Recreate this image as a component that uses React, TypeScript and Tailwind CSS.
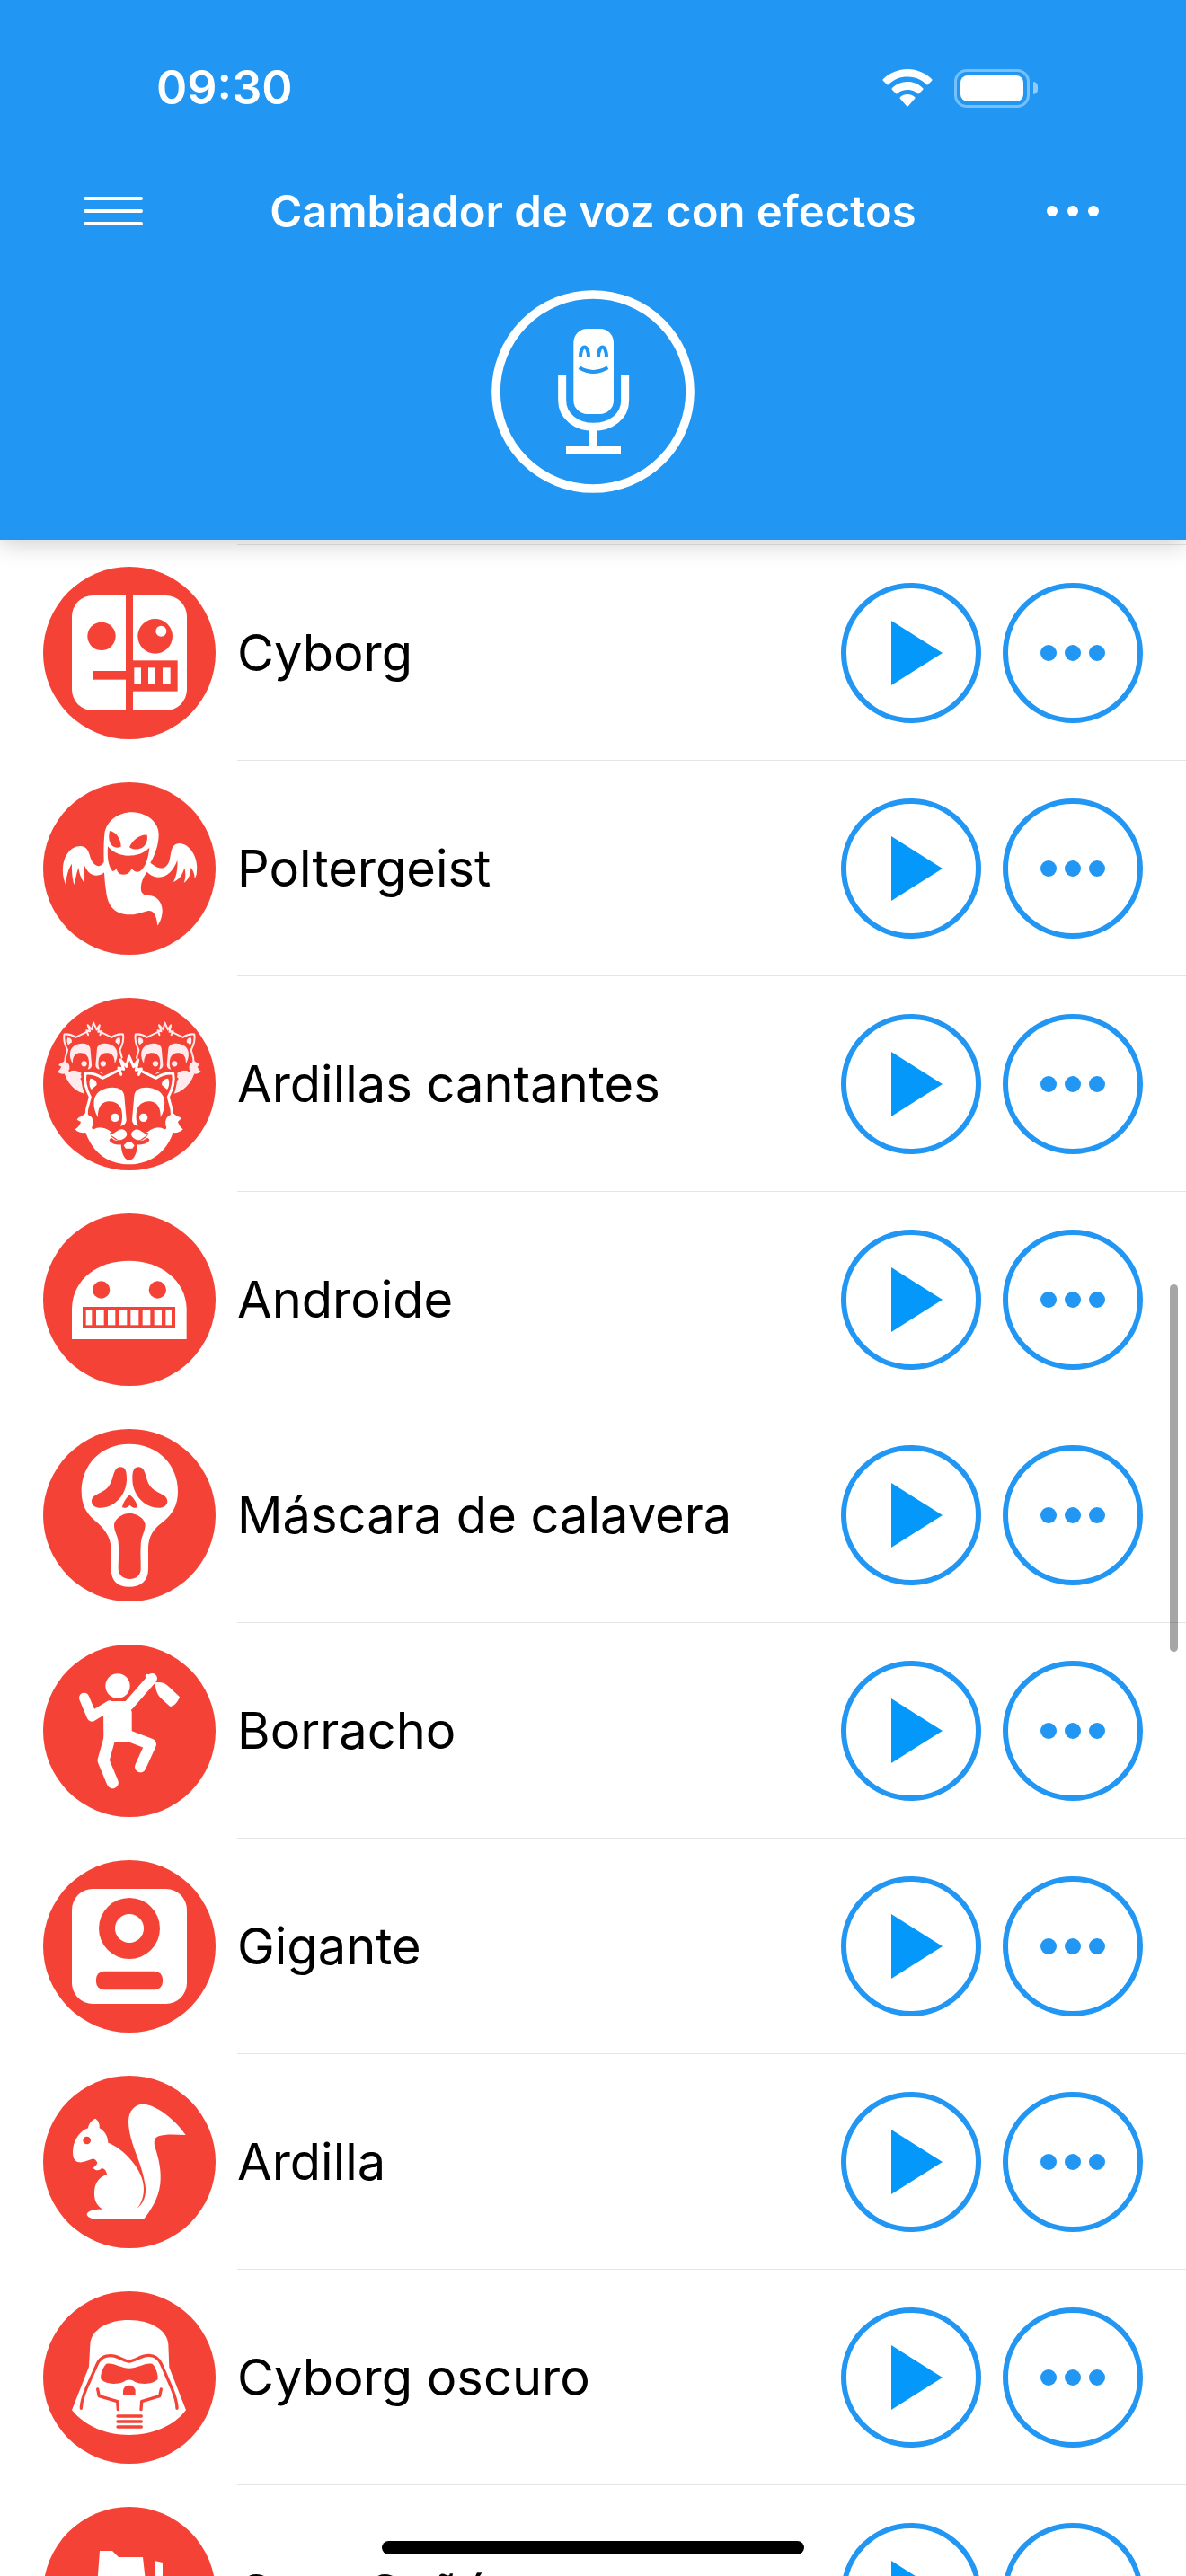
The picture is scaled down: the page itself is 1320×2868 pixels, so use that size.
import type { ReactNode } from "react";

const RED = "#f44336";
const BLUE = "#2196f3";

function Badge({ children }: { children: ReactNode }) {
  return (
    <svg viewBox="24 33 576 576" className="size-[192px] shrink-0" aria-hidden="true">
      <circle cx="312" cy="321" r="288" fill={RED} />
      {children}
    </svg>
  );
}

function Cyborg() {
  return (
    <Badge>
      <rect x="120" y="129" width="384" height="384" rx="70" fill="#fff" />
      <g fill={RED}>
        <rect x="300" y="129" width="24" height="384" />
        <circle cx="219" cy="265" r="47" />
        <circle cx="398" cy="265" r="58" />
        <rect x="189" y="381" width="120" height="29" />
        <rect x="320" y="346" width="153" height="103" />
      </g>
      <g fill="#fff">
        <circle cx="418" cy="248" r="18" />
        <rect x="328" y="370" width="23" height="54" />
        <rect x="375" y="370" width="24" height="54" />
        <rect x="423" y="370" width="26" height="54" />
      </g>
    </Badge>
  );
}

function Ghost() {
  return (
    <Badge>
      <path
        fill="#fff"
        d="M323 133C370 135 410 165 410 207C410 245 395 280 382 302C396 312 412 324 428 318C462 302 436 240 478 237C518 238 542 290 537 326C537 338 536 346 530 353C530 338 524 326 517 317C518 340 508 360 494 369C501 350 500 334 496 319C490 340 480 358 459 366C470 345 474 318 472 293C460 325 440 350 410 350C392 350 378 340 371 332C355 355 347 375 352 398C360 413 375 410 385 412C410 418 423 440 422 465C420 490 412 503 406 512C404 490 398 462 377 462C360 464 345 475 314 475C250 474 238 430 234 395C230 370 229 350 228 334C215 347 190 348 175 332C165 320 163 312 160 307C158 330 160 350 159 366C150 352 144 336 142 318C134 338 134 356 127 375C121 352 119 330 120 305C106 325 101 350 100 377C94 360 88 345 90 320C92 280 115 245 150 246C190 250 170 302 208 313C218 313 224 305 227 298C226 270 226 240 229 205C235 165 270 133 323 133Z"
      />
      <g fill={RED}>
        <path d="M246 195C268 197 285 225 284 248C270 255 255 250 249 238C242 225 243 210 246 195Z" />
        <path d="M371 209C345 207 322 228 312 250C328 262 355 258 366 240C372 230 373 220 371 209Z" />
        <path d="M240 247C238 280 240 310 255 329C262 331 266 325 268 320C272 330 275 341 292 341C308 341 316 330 320 320C326 330 335 334 346 331C368 315 375 285 379 251C360 270 335 278 308 278C280 278 255 265 240 247Z" />
      </g>
    </Badge>
  );
}

function ChipmunkHalf({ tone }: { tone: string }) {
  return (
    <>
      <path
        d="M168 435L170 405L181 364C166 335 160 310 165 286C185 283 205 290 222 301L282 272"
        fill="none"
        stroke={tone}
        strokeWidth="9"
        strokeLinejoin="round"
        strokeLinecap="round"
      />
      <path fill={tone} d="M182 302C195 302 206 315 202 325L185 339C178 330 176 312 182 302Z" />
      <path
        fill={tone}
        d="M207 432C188 400 188 362 212 345C245 324 292 328 295 360L302 440C302 452 292 460 282 461C290 445 290 420 284 402C276 384 258 376 240 379C214 383 206 405 207 432Z"
      />
      <circle cx="264" cy="433" r="14" fill={tone} />
    </>
  );
}

function ChipmunkHead({ tone }: { tone: string }) {
  return (
    <>
      <path
        fill={RED}
        d="M168 440L170 405L181 364C166 335 160 310 165 286C185 283 205 290 222 301L280 270L312 228L344 270L402 301C419 290 439 283 459 286C464 310 458 335 443 364L454 405L456 440L440 520H184Z"
      />
      <path
        fill={tone}
        d="M131 472C142 465 148 455 150 447L137 440C142 430 155 430 166 418L184 430C194 440 192 455 189 470C210 462 235 466 250 480L312 500L374 480C389 466 414 462 435 470C432 455 430 440 440 430L458 418C469 430 482 430 485 436L474 447C476 455 482 465 491 472C480 484 465 484 458 483C435 550 380 589 312 589C240 589 190 550 166 483C155 484 140 484 131 472Z"
      />
      <ChipmunkHalf tone={tone} />
      <g transform="translate(623 0) scale(-1 1)">
        <ChipmunkHalf tone={tone} />
      </g>
      <path
        d="M284 289L276 267L293 271L282 240L302 262L311 228L326 263L341 240L334 274L352 270L343 289"
        fill="none"
        stroke={tone}
        strokeWidth="9"
        strokeLinejoin="round"
        strokeLinecap="round"
      />
      <g fill="none" stroke={RED} strokeWidth="11" strokeLinecap="round">
        <path d="M192 466C208 456 235 458 256 474" />
        <path d="M430 466C414 456 387 458 366 474" />
      </g>
      <path fill={RED} d="M246 485L292 460H330L376 485C372 500 350 515 311 515C272 515 250 500 246 485Z" />
      <path
        d="M252 508C262 520 290 520 311 506C332 520 360 520 372 508"
        fill="none"
        stroke={RED}
        strokeWidth="13"
        strokeLinecap="round"
      />
      <path fill={RED} d="M284 516H339C339 550 328 575 311 575C295 575 284 550 284 516Z" />
      <g fill={tone}>
        <path d="M250 491L277 474C290 468 302 476 304 488C302 500 290 508 275 508Z" />
        <path d="M372 491L345 474C332 468 320 478 318 488C320 500 332 508 347 508Z" />
        <path d="M293 526L303 516H320L329 526L322 536H300Z" />
      </g>
    </>
  );
}

function Chipmunks() {
  return (
    <Badge>
      <g transform="translate(-16 -37) scale(.67)">
        <ChipmunkHead tone="#ffebee" />
      </g>
      <g transform="translate(222 -37) scale(.67)">
        <ChipmunkHead tone="#ffebee" />
      </g>
      <path fill={RED} d="M152 445L156 405L167 364C152 335 148 300 155 274C185 270 205 276 222 287L268 262L311 205L354 262L402 287C425 276 445 270 469 274C475 300 470 335 457 364L468 405L472 445L450 560H170Z" />
      <ChipmunkHead tone="#fff" />
    </Badge>
  );
}

function Android() {
  const teeth = [
    [167, 20],
    [201, 26],
    [240, 25],
    [278, 26],
    [316, 27],
    [356, 26],
    [395, 25],
    [433, 20],
  ];
  return (
    <Badge>
      <path fill="#fff" d="M120 453V350C122 250 210 191 311 191C415 191 500 255 503 350V453Z" />
      <g fill={RED}>
        <circle cx="218" cy="288" r="29" />
        <circle cx="406" cy="288" r="29" />
        <rect x="156" y="345" width="309" height="72" />
      </g>
      {teeth.map(([x, w]) => (
        <rect key={x} x={x} y="356" width={w} height="50" fill="#fff" />
      ))}
    </Badge>
  );
}

function Skull() {
  const eye =
    "M282 160C298 160 303 172 303 200C303 250 265 296 215 296C200 296 186 288 186 275C186 250 220 250 240 228C262 205 254 162 282 160Z";
  return (
    <Badge>
      <path
        fill="#fff"
        d="M312 83C410 83 474 155 474 240C474 290 454 318 430 338C400 362 376 380 375 435V500C375 540 350 560 312 560C272 560 251 540 251 500V435C250 390 225 362 196 338C170 315 152 290 152 240C152 155 215 83 312 83Z"
      />
      <g fill={RED}>
        <path d={eye} />
        <path d={eye} transform="translate(625 0) scale(-1 1)" />
        <path d="M313 254C322 256 338 280 340 295C330 298 322 296 313 287C305 296 298 298 288 295C290 280 305 256 313 254Z" />
        <path d="M313 314C342 316 364 335 365 352C365 378 350 390 350 425C348 450 351 480 350 500C350 520 335 534 313 534C290 534 275 518 275 498C276 470 277 430 275 410C272 385 260 375 261 352C263 335 285 315 313 314Z" />
      </g>
    </Badge>
  );
}

function Drunk() {
  return (
    <Badge>
      <g fill="#fff">
        <circle cx="273" cy="171" r="41" />
        <path d="M225 240L240 222H303L320 257V321L305 357H226Z" />
        <path d="M397 160C415 158 428 160 440 170L480 208C474 224 464 238 448 240L415 210C402 195 400 180 397 160Z" />
        <circle cx="372" cy="138" r="7" />
      </g>
      <g fill="none" stroke="#fff" strokeLinecap="round" strokeLinejoin="round">
        <path d="M161 211L187 273L246 237" strokeWidth="34" />
        <path d="M308 238L388 146" strokeWidth="34" />
        <path d="M246 345L225 420L256 494" strokeWidth="39" />
        <path d="M310 338L383 366L349 441" strokeWidth="38" />
      </g>
    </Badge>
  );
}

function Giant() {
  return (
    <Badge>
      <rect x="120" y="129" width="384" height="384" rx="70" fill="#fff" />
      <circle cx="312" cy="261" r="102" fill={RED} />
      <circle cx="312" cy="261" r="48" fill="#fff" />
      <rect x="201" y="404" width="222" height="62" rx="26" fill={RED} />
    </Badge>
  );
}

function Squirrel() {
  return (
    <Badge>
      <path
        fill="#fff"
        d="M199 176C210 185 213 195 212 208C230 218 240 235 241 257C290 275 360 345 360 410C360 440 350 462 337 477C360 460 370 430 365 400C355 320 310 260 309 185C310 150 330 128 358 128C405 130 470 185 500 231C465 229 430 227 410 235C395 240 393 255 397 270C410 310 420 350 415 395C408 445 385 480 360 512L205 513C185 512 170 505 170 496C172 485 190 478 222 479C200 465 194 445 195 420C197 390 210 372 237 362C235 350 228 340 218 343C213 350 200 352 191 341C196 337 203 332 205 324C200 312 192 307 183 313C165 320 155 323 145 322C125 320 121 300 124 275C128 245 150 215 174 208C176 192 188 180 199 176Z"
      />
      <circle cx="170" cy="249" r="13" fill={RED} />
    </Badge>
  );
}

function DarkCyborg() {
  return (
    <Badge>
      <path
        fill="#fff"
        d="M181 210C185 160 240 129 311 129C385 129 440 165 442 210L445 287L501 430C460 485 385 513 311 513C235 513 165 485 120 430L177 285Z"
      />
      <g fill={RED}>
        <path d="M235 275C260 270 285 290 311 290C338 290 365 270 388 275C402 285 410 320 406 328C390 345 350 345 330 335C318 326 305 326 293 335C270 345 235 345 218 328C213 318 220 290 235 275Z" />
        <path d="M291 380V366C292 352 302 347 311 347C322 347 332 355 332 366V380Z" />
      </g>
      <g fill="none" stroke={RED} strokeWidth="10" strokeLinecap="round" strokeLinejoin="round">
        <path d="M151 424C151 402 158 382 168 358L205 275C220 244 250 246 265 250C285 256 298 267 311 267C325 267 340 256 358 250C375 245 402 243 418 275L454 358C464 382 471 402 471 424" />
        <path d="M206 360L211 383L272 401L274 428" />
        <path d="M418 360L413 383L353 401L351 428" />
        <path d="M273 450H352M273 468H352M273 486H352" />
      </g>
    </Badge>
  );
}

function Canyon() {
  return (
    <Badge>
      <path fill="#fff" d="M213 180H255L276 201H357L368 300L372 420H190L204 300Z" />
      <path fill="#fff" d="M396 213L423 219V420H396Z" />
    </Badge>
  );
}

const effects = [
  { name: "Cyborg", Icon: Cyborg },
  { name: "Poltergeist", Icon: Ghost },
  { name: "Ardillas cantantes", Icon: Chipmunks },
  { name: "Androide", Icon: Android },
  { name: "Máscara de calavera", Icon: Skull },
  { name: "Borracho", Icon: Drunk },
  { name: "Gigante", Icon: Giant },
  { name: "Ardilla", Icon: Squirrel },
  { name: "Cyborg oscuro", Icon: DarkCyborg },
  { name: "Gran Cañón", Icon: Canyon },
];

function StatusBar() {
  return (
    <div className="flex h-[196px] items-center justify-between pr-[165px] pl-[174px]">
      <time className="text-[52px] leading-none font-semibold">09:30</time>
      <div className="flex items-center gap-6">
        <svg viewBox="0 0 56 42" className="h-[42px] w-[56px]" fill="#fff" aria-label="Wi-Fi">
          <path d="M28 0C38 0 48 4 55 11Q56 12 55 13L51 17Q50 18 49 17C43 11 36 8.500 28 8.500C20 8.500 13 11 7 17Q6 18 5 17L1 13Q0 12 1 11C8 4 18 0 28 0Z" />
          <path d="M28 14C35 14 41 17 45 21Q46 22 45 23L41 27Q40 28 39 27C36 24 32 23 28 23C24 23 20 24 17 27Q16 28 15 27L11 23Q10 22 11 21C15 17 21 14 28 14Z" />
          <path d="M28 28C31 28 34 29 36 31Q37 32 36 33L29 41Q28 42 27 41L20 33Q19 32 20 31C22 29 25 28 28 28Z" />
        </svg>
        <div className="flex items-center gap-1" role="img" aria-label="Batería">
          <div className="h-[43px] w-[84px] rounded-[14px] border-[3px] border-white/40 p-1">
            <div className="size-full rounded-[8px] bg-white" />
          </div>
          <div className="h-[14px] w-[5px] rounded-r-full bg-white/50" />
        </div>
      </div>
    </div>
  );
}

function MicButton() {
  return (
    <button type="button" aria-label="Grabar" className="mx-auto mt-[49px] block rounded-full">
      <svg viewBox="81 69 678 678" className="size-[226px]" aria-hidden="true">
        <circle cx="420" cy="408" r="324" fill="none" stroke="#fff" strokeWidth="29" />
        <rect x="355" y="198" width="134" height="285" rx="46" fill="#fff" />
        <g fill="none" stroke="#fff" strokeWidth="27">
          <path d="M317 354V438C317 490 365 526 421 526C480 526 527 490 527 438V354" />
          <path d="M421 530V600M330 604H513" />
        </g>
        <g fill="none" stroke={BLUE} strokeWidth="12">
          <path d="M378 294C378 248 405 248 405 294M438 294C438 248 465 248 465 294" />
          <path d="M374 328Q421 356 469 328" />
        </g>
      </svg>
    </button>
  );
}

export default function App() {
  return (
    <div className="relative flex h-screen flex-col overflow-hidden bg-white font-['Inter','Liberation_Sans',sans-serif] text-black">
      <header className="relative z-10 shrink-0 bg-[#2196f3] pb-[52px] text-white shadow-[0_6px_24px_rgba(0,0,0,0.18)]">
        <StatusBar />
        <div className="grid h-[78px] grid-cols-[1fr_auto_1fr] items-center px-[93px]">
          <button type="button" aria-label="Menú" className="flex w-[66px] flex-col gap-[10px]">
            <span className="h-1 rounded-full bg-white" />
            <span className="h-1 rounded-full bg-white" />
            <span className="h-1 rounded-full bg-white" />
          </button>
          <h1 className="text-[49px] leading-none font-semibold">Cambiador de voz con efectos</h1>
          <button type="button" aria-label="Más opciones" className="flex w-[66px] justify-center gap-[11px] justify-self-end">
            <span className="size-3 rounded-full bg-white" />
            <span className="size-3 rounded-full bg-white" />
            <span className="size-3 rounded-full bg-white" />
          </button>
        </div>
        <MicButton />
      </header>

      <main className="relative min-h-0 flex-1 overflow-hidden">
        <div className="mt-[5px] ml-[264px] h-px bg-[#e5e5e5]" />
        <ul>
          {effects.map(({ name, Icon }) => (
            <li key={name} className="flex h-[240px] items-center gap-6 pl-12">
              <Icon />
              <div className="flex h-full flex-1 items-center gap-6 border-b border-[#e5e5e5] pt-px pr-12">
                <span className="flex-1 text-[56px] leading-[72px]">{name}</span>
                <button
                  type="button"
                  aria-label={`Reproducir ${name}`}
                  className="flex size-[156px] items-center justify-center rounded-full border-6 border-[#2196f3] pl-[13px]"
                >
                  <svg viewBox="0 0 57 72" className="h-[72px] w-[57px]" aria-hidden="true">
                    <path d="M0 0L57 36L0 72Z" fill="#0398fa" />
                  </svg>
                </button>
                <button
                  type="button"
                  aria-label={`Opciones de ${name}`}
                  className="flex size-[156px] items-center justify-center gap-[9px] rounded-full border-6 border-[#2196f3]"
                >
                  <span className="size-[18px] rounded-full bg-[#2196f3]" />
                  <span className="size-[18px] rounded-full bg-[#2196f3]" />
                  <span className="size-[18px] rounded-full bg-[#2196f3]" />
                </button>
              </div>
            </li>
          ))}
        </ul>
        <div className="absolute top-[829px] right-[9px] h-[409px] w-[9px] rounded-full bg-black/35" />
      </main>

      <div className="absolute bottom-6 left-1/2 h-[15px] w-[470px] -translate-x-1/2 rounded-full bg-black" />
    </div>
  );
}
